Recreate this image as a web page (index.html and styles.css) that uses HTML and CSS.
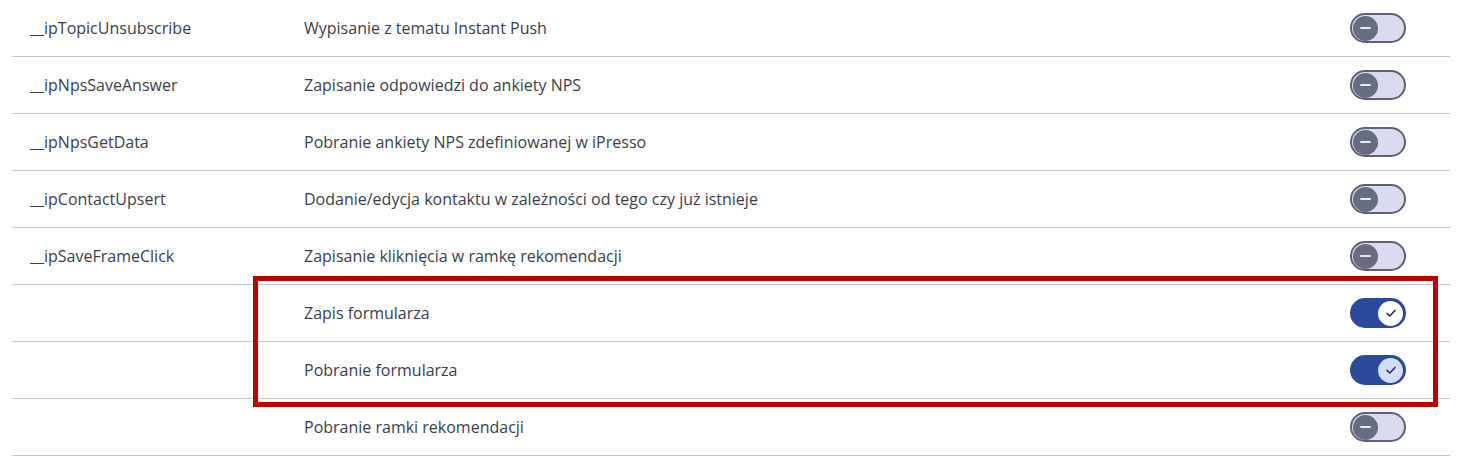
FILE: index.html
```html
<!DOCTYPE html>
<html lang="pl">
<head>
  <meta charset="UTF-8">
  <title>Zdarzenia API</title>
  <meta name="viewport" content="width=device-width, initial-scale=1">
  <link rel="stylesheet" href="styles.css">
</head>
<body>

  <div class="list">
    <div class="row">
      <span class="name">__ipTopicUnsubscribe</span>
      <span class="desc">Wypisanie z tematu Instant Push</span>
      <span class="switch"><span class="knob"></span></span>
    </div>
    <div class="row">
      <span class="name">__ipNpsSaveAnswer</span>
      <span class="desc">Zapisanie odpowiedzi do ankiety NPS</span>
      <span class="switch"><span class="knob"></span></span>
    </div>
    <div class="row">
      <span class="name">__ipNpsGetData</span>
      <span class="desc">Pobranie ankiety NPS zdefiniowanej w iPresso</span>
      <span class="switch"><span class="knob"></span></span>
    </div>
    <div class="row">
      <span class="name">__ipContactUpsert</span>
      <span class="desc">Dodanie/edycja kontaktu w zależności od tego czy już istnieje</span>
      <span class="switch"><span class="knob"></span></span>
    </div>
    <div class="row">
      <span class="name">__ipSaveFrameClick</span>
      <span class="desc">Zapisanie kliknięcia w ramkę rekomendacji</span>
      <span class="switch"><span class="knob"></span></span>
    </div>
    <div class="row">
      <span class="name"></span>
      <span class="desc">Zapis formularza</span>
      <span class="switch on">
        <span class="knob">
          <svg viewBox="0 0 14 14" width="14" height="14"><path d="M3 7.4 L5.8 10 L11 4.4" fill="none" stroke="#1e2c5e" stroke-width="1.5" stroke-linecap="round" stroke-linejoin="round"/></svg>
        </span>
      </span>
    </div>
    <div class="row">
      <span class="name"></span>
      <span class="desc">Pobranie formularza</span>
      <span class="switch on focus">
        <span class="knob">
          <svg viewBox="0 0 14 14" width="14" height="14"><path d="M3 7.4 L5.8 10 L11 4.4" fill="none" stroke="#1e2c5e" stroke-width="1.5" stroke-linecap="round" stroke-linejoin="round"/></svg>
        </span>
      </span>
    </div>
    <div class="row">
      <span class="name"></span>
      <span class="desc">Pobranie ramki rekomendacji</span>
      <span class="switch"><span class="knob"></span></span>
    </div>

    <!-- zaznaczenie -->
    <div class="highlight"></div>
  </div>

</body>
</html>
```

FILE: styles.css
```css
body {
  margin: 0;
  background: #fff;
  font-family: 'Open Sans', sans-serif;
  color: #3b3e4b;
  overflow: hidden;
}

.list {
  position: relative;
  margin: 0 9px 0 12px;
}

.row {
  display: grid;
  grid-template-columns: 274px 1fr auto;
  align-items: center;
  height: 56px;
  padding: 0 44px 0 18px;
  border-bottom: 1px solid #c3c6dc;
  font-size: 16px;
  font-weight: 400;
}

.switch {
  display: flex;
  align-items: center;
  width: 50px;
  height: 26px;
  padding: 0 1px;
  border: 2px solid #5d6175;
  border-radius: 16px;
  background: #d9dcee;
}

.knob {
  display: flex;
  align-items: center;
  justify-content: center;
  width: 25px;
  height: 25px;
  border-radius: 50%;
  background: #686c7f;
}

.knob::after {
  content: "";
  width: 11px;
  height: 2px;
  border-radius: 1px;
  background: #e6e8f2;
}

.switch.on {
  justify-content: flex-end;
  border-color: #2c4a9b;
  background: #2c4a9b;
}

.switch.on .knob {
  background: #fff;
}

.switch.on .knob::after {
  display: none;
}

.switch.focus .knob {
  background: #d3dcf6;
}

.highlight {
  position: absolute;
  left: 241px;
  top: 276px;
  width: 1175px;
  height: 121px;
  border: 5px solid #bb0000;
}
```
